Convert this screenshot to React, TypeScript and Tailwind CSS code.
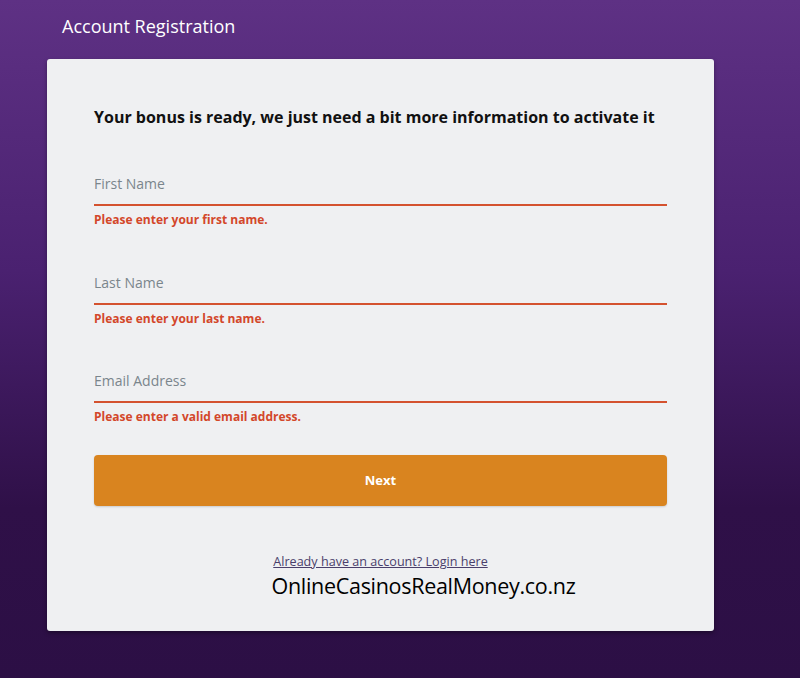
export default function App() {
  const fields = [
    { label: "First Name", error: "Please enter your first name." },
    { label: "Last Name", error: "Please enter your last name." },
    { label: "Email Address", error: "Please enter a valid email address." },
  ];

  return (
    <div
      className="w-[800px] h-[678px] overflow-hidden bg-[linear-gradient(to_bottom,#5e3184_0%,#4a2170_40%,#2f1048_75%,#2c0f45_100%)]"
      style={{ fontFamily: '"Open Sans", "Noto Sans", sans-serif' }}
    >
      <div className="pl-[62px] pt-[13px] h-[59px]">
        <h1 className="text-[18px] leading-[26px] text-white">Account Registration</h1>
      </div>

      <div className="ml-[47px] w-[667px] h-[572px] bg-[#eff0f2] rounded-[3px] shadow-[0_2px_4px_rgba(0,0,0,0.35)] px-[47px] pt-[47px]">
        <h2 className="text-[16px] leading-[22px] font-bold text-[#111]">
          Your bonus is ready, we just need a bit more information to activate it
        </h2>

        <div className="mt-[42px] flex flex-col gap-[40.5px]">
          {fields.map((f) => (
            <div key={f.label}>
              <div className="h-[36px] border-b-2 border-[#d4522f] pt-[1px]">
                <span className="text-[14px] leading-[20px] text-[#7a858c]">{f.label}</span>
              </div>
              <p className="mt-[6px] text-[12px] leading-[16px] font-bold text-[#d3472a]">{f.error}</p>
            </div>
          ))}
        </div>

        <button className="mt-[30px] w-full h-[51px] rounded-[4px] bg-[#d9841f] text-white text-[13px] font-bold shadow-[0_1px_2px_rgba(0,0,0,0.15)]">
          Next
        </button>

        <div className="mt-[48px] flex flex-col items-center">
          <a href="#" className="text-[12.6px] leading-[16px] text-[#4a3f6b] underline">
            Already have an account? Login here
          </a>
          <span className="mt-[4px] ml-[86px] text-[21.5px] leading-[24px] text-black tracking-[-0.3px]">
            OnlineCasinosRealMoney.co.nz
          </span>
        </div>
      </div>
    </div>
  );
}
